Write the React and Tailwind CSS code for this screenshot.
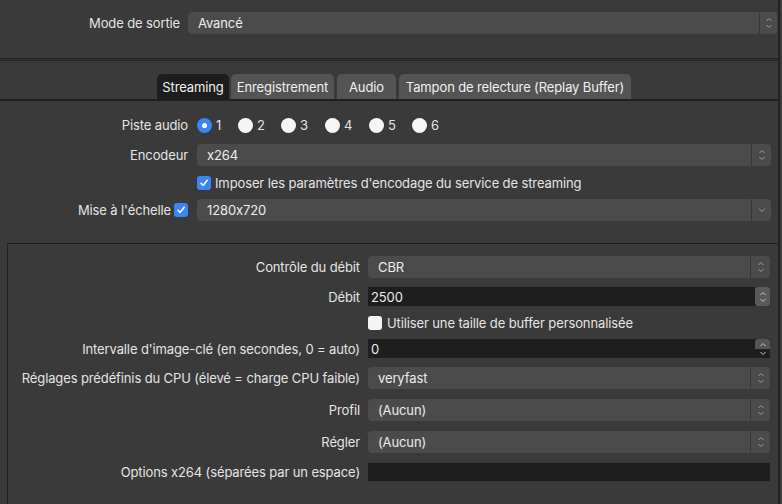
import React from "react";

function UpDown({ color = "#a0a0a0" }) {
  return (
    <svg width="8" height="14" viewBox="0 0 8 14" fill="none">
      <path d="M1.5 5 L4 2.5 L6.5 5" stroke={color} strokeWidth="1" />
      <path d="M1.5 9 L4 11.5 L6.5 9" stroke={color} strokeWidth="1" />
    </svg>
  );
}

function Down() {
  return (
    <svg width="10" height="8" viewBox="0 0 10 8" fill="none">
      <path d="M2 2.5 L5 5.5 L8 2.5" stroke="#a0a0a0" strokeWidth="1" />
    </svg>
  );
}

function Combo({ text, single = false, arrowW = "w-[20px]" }) {
  return (
    <div className="flex h-[22px] flex-1 items-stretch rounded-[4px] bg-[#4b4b4b] text-[13px] text-[#ececec]">
      <div className="flex flex-1 items-center pl-[10px]">{text}</div>
      <div className={`flex ${arrowW} items-center justify-center border-l border-[#383838]`}>
        {single ? <Down /> : <UpDown />}
      </div>
    </div>
  );
}

function Spin({ text, variant = 0 }) {
  return (
    <div className="flex h-[19px] flex-1 items-stretch bg-[#1e1e1e] text-[13px] text-[#ececec]">
      <div className="flex flex-1 items-center pl-[3px]">{text}</div>
      {variant === 0 ? (
        <div className="flex w-[15px] items-center justify-center rounded-[3px] bg-[#5a5a5a]">
          <UpDown color="#c8c8c8" />
        </div>
      ) : (
        <div className="flex w-[15px] flex-col">
          <div className="flex h-[10px] items-center justify-center rounded-t-[3px] bg-[#555555]">
            <svg width="8" height="5" viewBox="0 0 8 5" fill="none">
              <path d="M1.5 4 L4 1.5 L6.5 4" stroke="#c8c8c8" strokeWidth="1" />
            </svg>
          </div>
          <div className="flex flex-1 items-center justify-center">
            <svg width="8" height="5" viewBox="0 0 8 5" fill="none">
              <path d="M1.5 1 L4 3.5 L6.5 1" stroke="#c8c8c8" strokeWidth="1" />
            </svg>
          </div>
        </div>
      )}
    </div>
  );
}

function Check({ checked }) {
  return checked ? (
    <div className="flex h-[14px] w-[14px] shrink-0 items-center justify-center rounded-[3px] bg-[#3a86f5]">
      <svg width="10" height="10" viewBox="0 0 10 10" fill="none">
        <path d="M2 5.3 L4.1 7.5 L8.2 2.3" stroke="#ffffff" strokeWidth="1.5" strokeLinecap="round" strokeLinejoin="round" />
      </svg>
    </div>
  ) : (
    <div className="h-[14px] w-[14px] shrink-0 rounded-[3px] bg-[#f4f4f4]" />
  );
}

function Radio({ selected, label, w }) {
  return (
    <div className={`flex items-center ${w}`}>
      {selected ? (
        <div className="flex h-[15px] w-[15px] items-center justify-center rounded-full bg-[#3a86f5]">
          <div className="h-[5px] w-[5px] rounded-full bg-white" />
        </div>
      ) : (
        <div className="h-[15px] w-[15px] rounded-full bg-[#f6f6f6]" />
      )}
      <span className="ml-[4px]">{label}</span>
    </div>
  );
}

function Tab({ label, selected, w, ml = "" }) {
  return (
    <div
      className={`flex h-[25px] ${w} ${ml} items-center justify-center rounded-t-[5px] text-[13px] text-[#f0f0f0] ${
        selected ? "bg-[#1d1d1d]" : "bg-[#545454]"
      }`}
    >
      {label}
    </div>
  );
}

function GRow({ label, children, mt = "", h = "h-[22px]" }) {
  return (
    <div className={`flex ${h} shrink-0 items-center ${mt}`}>
      <div className="w-[352px] text-right">{label}</div>
      <div className="ml-[8px] flex flex-1 items-center">{children}</div>
    </div>
  );
}

export default function App() {
  return (
    <div className="flex h-[504px] w-[782px] overflow-hidden bg-[#3a3a3a] text-[13px] leading-[16px] tracking-[-0.12px] text-[#e4e4e4] [font-family:Inter,'Liberation_Sans',sans-serif] [font-feature-settings:'calt'_0]">
      <div className="flex w-[778px] flex-col">
        {/* Top: Mode de sortie */}
        <div className="mt-[12px] flex h-[22px] shrink-0 items-center pr-[1px]">
          <div className="w-[180px] text-right">Mode de sortie</div>
          <div className="ml-[8px] flex flex-1">
            <Combo text="Avancé" arrowW="w-[18px]" />
          </div>
        </div>

        {/* separator */}
        <div className="mt-[24px] h-[1px] shrink-0 bg-[#222222]" />
        <div className="h-[1px] shrink-0 bg-[#303030]" />
        <div className="h-[1px] shrink-0 bg-[#262626]" />

        {/* Tabs */}
        <div className="mt-[13px] flex h-[25px] shrink-0 items-end justify-center pl-[10px]">
          <Tab label="Streaming" selected w="w-[72px]" />
          <Tab label="Enregistrement" w="w-[103px]" ml="ml-[2px]" />
          <Tab label="Audio" w="w-[59px]" ml="ml-[3px]" />
          <Tab label="Tampon de relecture (Replay Buffer)" w="w-[232px]" ml="ml-[3px]" />
        </div>
        <div className="h-[2px] shrink-0 bg-[#1f1f1f]" />

        {/* Top form */}
        <div className="flex shrink-0 flex-col pr-[7px]">
          <div className="mt-[13px] flex h-[22px] items-center">
            <div className="w-[188px] text-right">Piste audio</div>
            <div className="ml-[9px] flex items-center">
              <Radio selected label="1" w="w-[41px]" />
              <Radio label="2" w="w-[43px]" />
              <Radio label="3" w="w-[44px]" />
              <Radio label="4" w="w-[44px]" />
              <Radio label="5" w="w-[43px]" />
              <Radio label="6" w="w-[30px]" />
            </div>
          </div>

          <div className="mt-[8px] flex h-[22px] items-center">
            <div className="w-[188px] text-right">Encodeur</div>
            <div className="ml-[9px] flex flex-1">
              <Combo text="x264" />
            </div>
          </div>

          <div className="mt-[6px] flex h-[22px] items-center">
            <div className="w-[188px]" />
            <div className="ml-[9px] flex items-center gap-[4px]">
              <Check checked />
              <span>Imposer les paramètres d'encodage du service de streaming</span>
            </div>
          </div>

          <div className="mt-[5px] flex h-[22px] items-center">
            <div className="flex w-[188px] items-center justify-end gap-[3px]">
              <span>Mise à l'échelle</span>
              <Check checked />
            </div>
            <div className="ml-[9px] flex flex-1">
              <Combo text="1280x720" single />
            </div>
          </div>
        </div>

        {/* Group box */}
        <div className="mt-[22px] ml-[7px] flex flex-1 flex-col border-t border-l border-[#1f1f1f] pt-[12px] pr-[8px]">
          <GRow label="Contrôle du débit">
            <Combo text="CBR" />
          </GRow>
          <GRow label="Débit" mt="mt-[9px]" h="h-[19px]">
            <Spin text="2500" />
          </GRow>
          <div className="mt-[10px] flex h-[14px] shrink-0 items-center">
            <div className="w-[352px]" />
            <div className="ml-[8px] flex items-center gap-[5px]">
              <Check />
              <span>Utiliser une taille de buffer personnalisée</span>
            </div>
          </div>
          <GRow label="Intervalle d'image-clé (en secondes, 0 = auto)" mt="mt-[9px]" h="h-[19px]">
            <Spin text="0" variant={1} />
          </GRow>
          <GRow label="Réglages prédéfinis du CPU (élevé = charge CPU faible)" mt="mt-[9px]">
            <Combo text="veryfast" />
          </GRow>
          <GRow label="Profil" mt="mt-[10px]">
            <Combo text="(Aucun)" />
          </GRow>
          <GRow label="Régler" mt="mt-[10px]">
            <Combo text="(Aucun)" />
          </GRow>
          <GRow label="Options x264 (séparées par un espace)" mt="mt-[10px]" h="h-[18px]">
            <div className="h-[18px] flex-1 bg-[#1e1e1e]" />
          </GRow>
        </div>
      </div>
      <div className="w-[2px] bg-[#222222]" />
      <div className="w-[2px]" />
    </div>
  );
}
